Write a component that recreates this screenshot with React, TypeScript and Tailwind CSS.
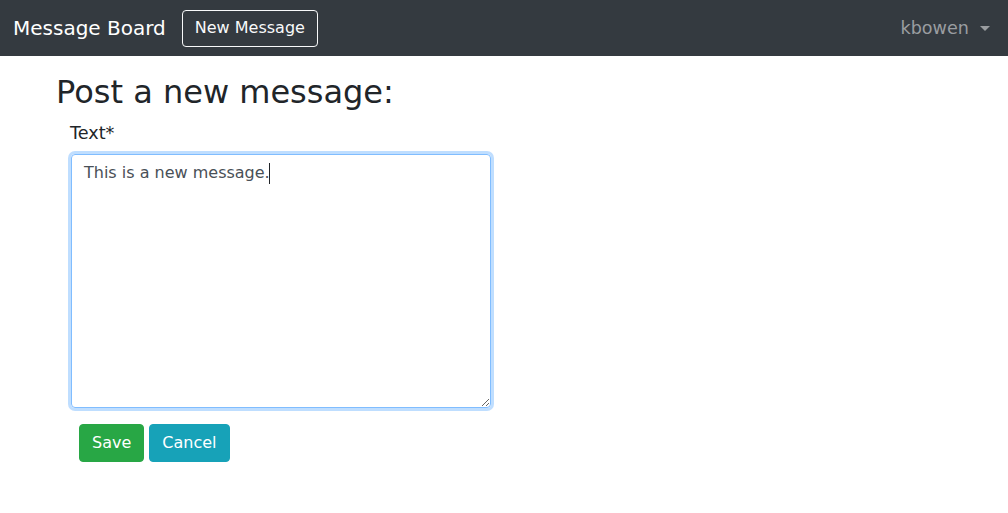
import { useEffect, useRef } from 'react';

export default function App() {
  const textRef = useRef<HTMLTextAreaElement>(null);

  useEffect(() => {
    const el = textRef.current;
    if (el) {
      el.focus();
      el.setSelectionRange(el.value.length, el.value.length);
    }
  }, []);

  return (
    <div className="min-h-screen bg-white text-[#212529] font-['DejaVu_Sans',sans-serif]">
      {/* Navbar */}
      <nav className="h-[56px] bg-[#343a40] flex items-center px-4">
        <a className="text-[20px] leading-[30px] text-white mr-4 -ml-[3px]">Message Board</a>
        <button className="h-[37px] px-3 border border-[#f8f9fa] rounded text-[16px] leading-6 text-[#f8f9fa]">
          New Message
        </button>
        <div className="ml-auto mr-[2px] flex items-center text-[17.6px] leading-6 text-[#9a9da0]">
          kbowen
          <span className="ml-[11px] w-0 h-0 border-x-[5px] border-x-transparent border-t-[5px] border-t-[#9a9da0]" />
        </div>
      </nav>

      {/* Content */}
      <div className="pl-[56px] pt-[17px]">
        <h2 className="text-[32px] leading-[1.2] mb-[10px]">Post a new message:</h2>
        <div className="pl-[15px]">
          <label className="block text-[17.6px] leading-6 mb-[9px] -ml-px">Text*</label>
          <div className="relative w-[420px]">
            <textarea
              ref={textRef}
              defaultValue="This is a new message."
              className="block w-[420px] h-[254px] px-3 py-[6px] text-[16px] leading-6 text-[#495057] border border-[#80bdff] rounded outline-none shadow-[0_0_0_3px_rgba(0,123,255,0.25)] resize-y font-['DejaVu_Sans',sans-serif]"
            />
            {/* text caret */}
            <span className="absolute left-[198px] top-[9px] h-[21px] w-px bg-[#212529] pointer-events-none" />
          </div>
          <div className="mt-[16px] ml-[8px] flex gap-[5px]">
            <button className="h-[38px] px-3 border border-[#28a745] rounded bg-[#28a745] text-white text-[16px] leading-6">Save</button>
            <button className="h-[38px] pl-3 pr-[13px] border border-[#17a2b8] rounded bg-[#17a2b8] text-white text-[16px] leading-6">Cancel</button>
          </div>
        </div>
      </div>
    </div>
  );
}
